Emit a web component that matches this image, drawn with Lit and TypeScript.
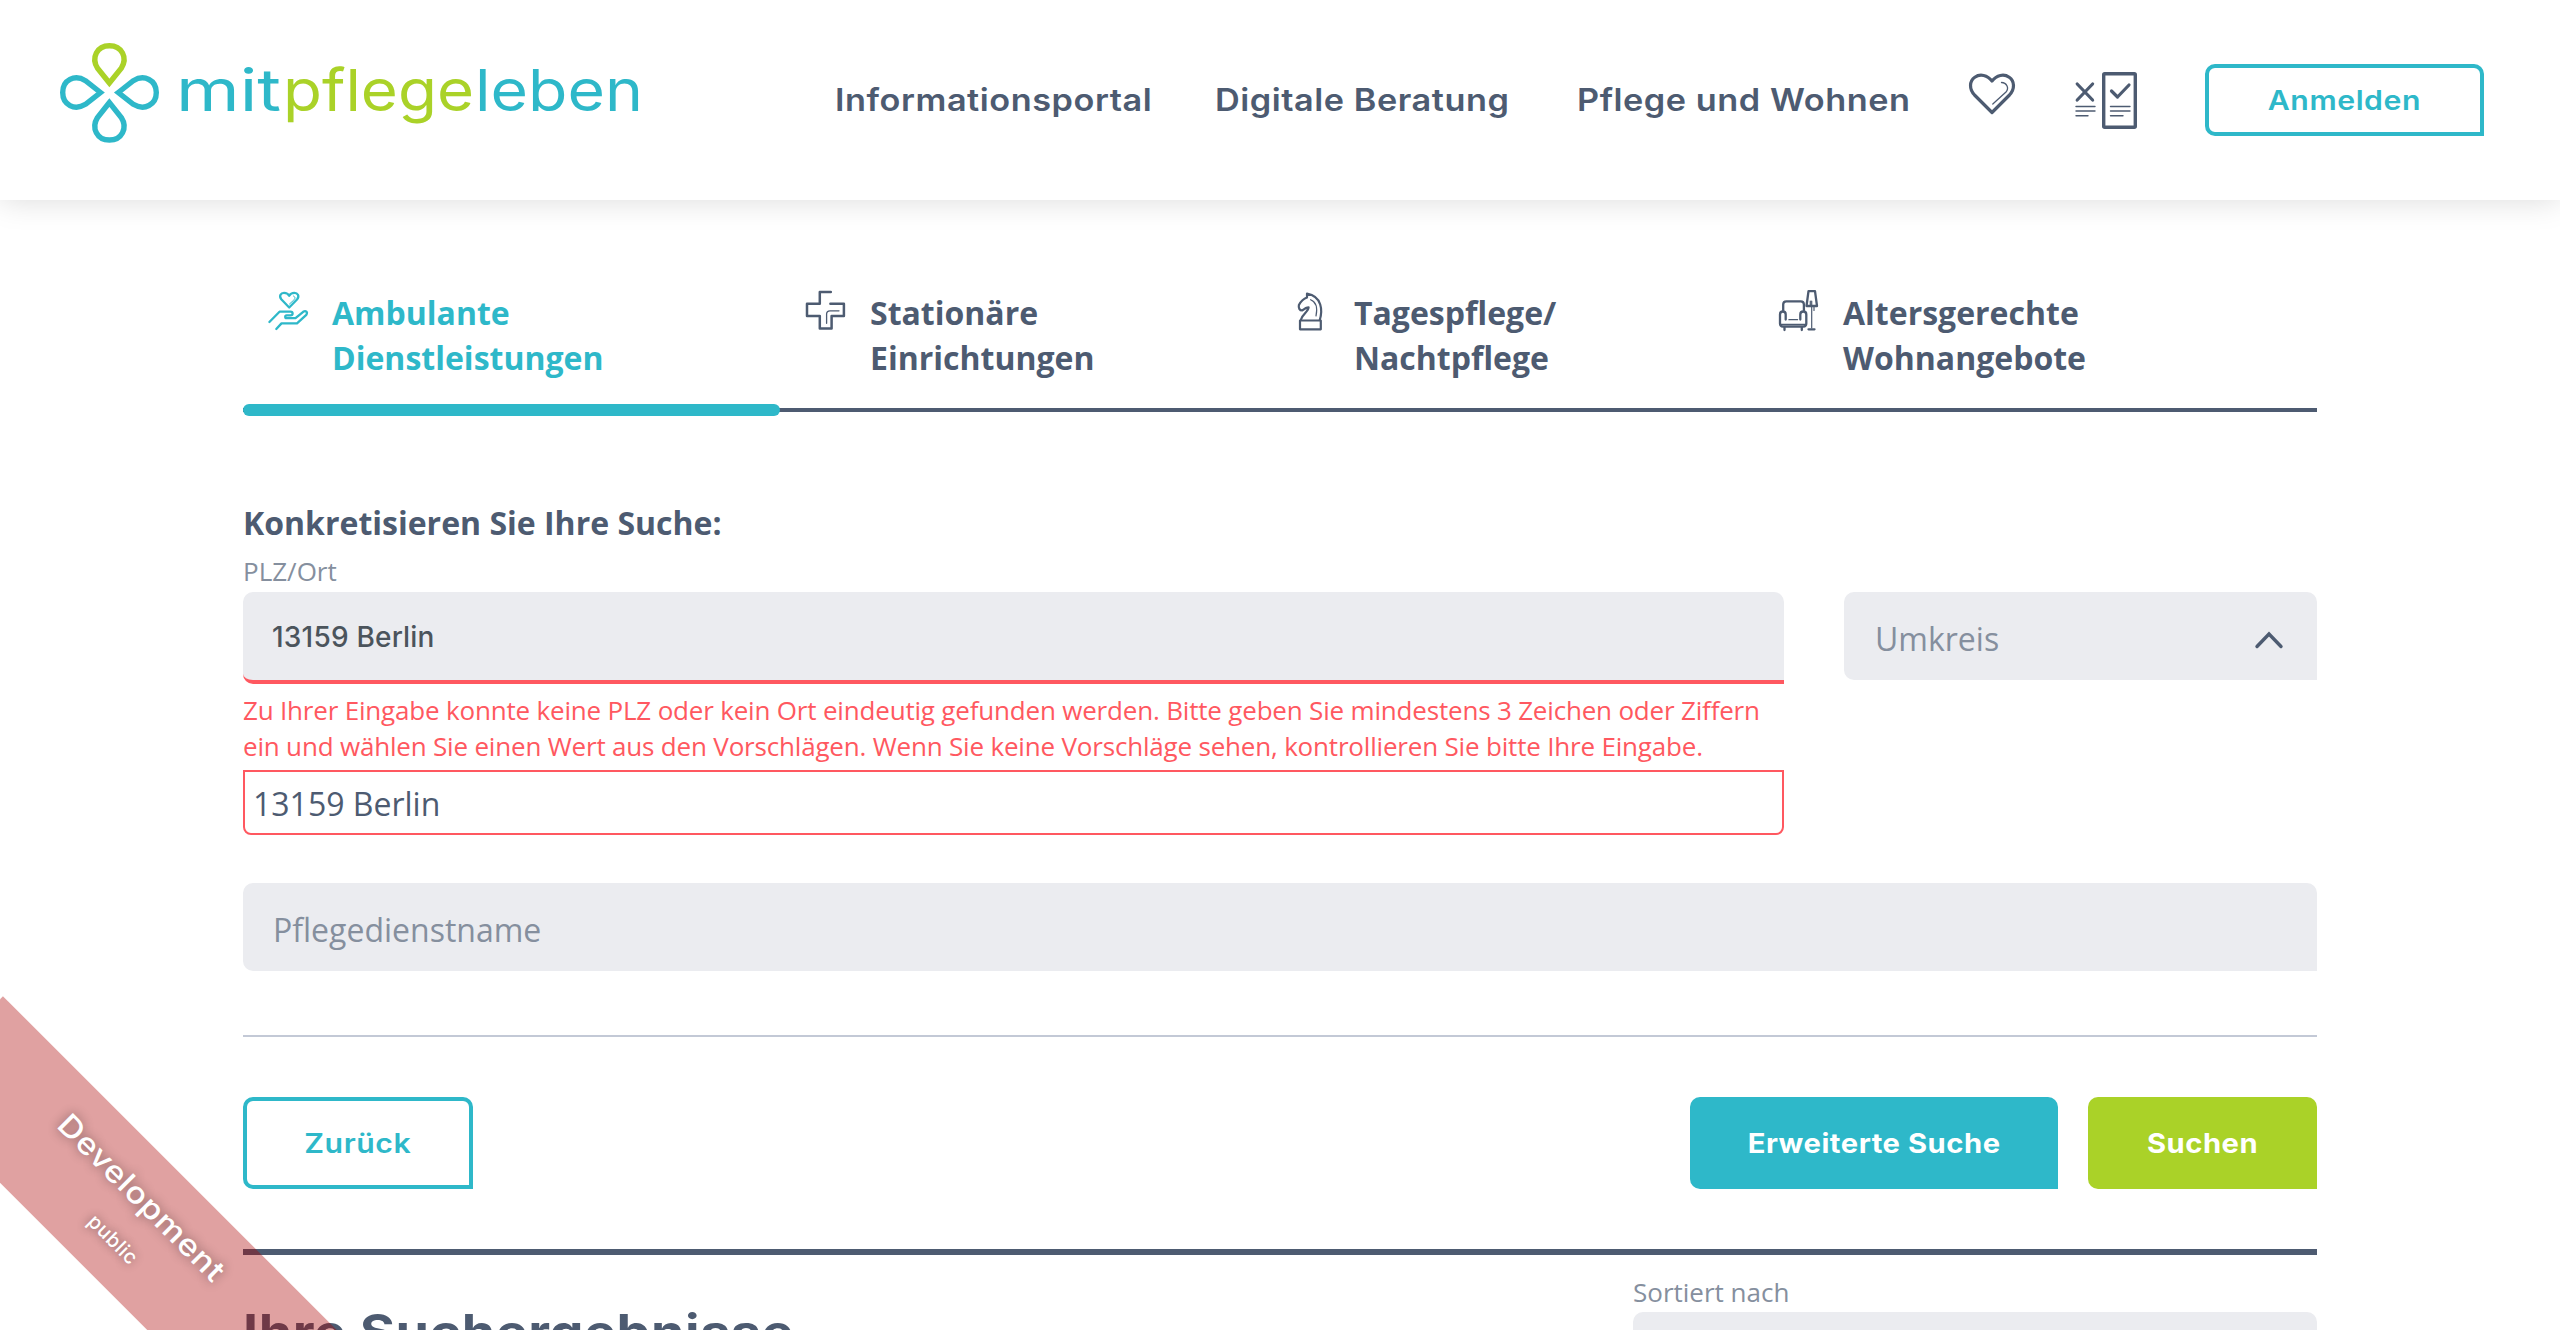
import { LitElement, html, css, svg } from "lit";
import { customElement } from "lit/decorators.js";

const clover = html`
  <svg class="logo" width="584" height="104" viewBox="0 0 584 104">
    <g fill="none" stroke-width="5.4" stroke-linejoin="miter" transform="translate(-1 0)">
      <path stroke="#aad228" d="M50.4 42 L38.5 27.2 C32 16.700 38 4.700 50.4 4.700 C62.800 4.700 69 16.700 62.300 27.200 Z" />
      <path stroke="#2eb8c9" d="M50.400 61.500 L38.500 76.500 C32 87 38 99 50.400 99 C62.800 99 69 87 62.300 76.500 Z" />
      <path stroke="#2eb8c9" d="M41.500 51.500 L26.500 39.700 C15.500 33 3.700 39.200 3.700 51.500 C3.700 63.800 15.500 70 26.500 63.300 Z" />
      <path stroke="#2eb8c9" d="M59.300 51.500 L74.300 39.700 C85.300 33 97.300 39.200 97.300 51.500 C97.300 63.800 85.300 70 74.300 63.300 Z" />
    </g>
    <g font-family="Inter, sans-serif" font-size="58">
      <text x="116" y="69.700" fill="#2eb8c9" textLength="105" lengthAdjust="spacingAndGlyphs">mit</text>
      <text x="223" y="69.700" fill="#aad228" textLength="191" lengthAdjust="spacingAndGlyphs">pflege</text>
      <text x="415" y="69.700" fill="#2eb8c9" textLength="168" lengthAdjust="spacingAndGlyphs">leben</text>
    </g>
  </svg>`;

const heart = html`
  <svg width="48" height="44" viewBox="0 0 48 44" fill="none" stroke="#4d5b71" stroke-linejoin="round">
    <path stroke-width="3.200" d="M24 40.500 L6.500 23 C1 17 1.300 9 6.800 5.200 C12 1.500 19.500 3 24 9 C28.500 3 36 1.500 41.200 5.200 C46.700 9 47 17 41.500 23 Z" />
    <path stroke-width="1.300" stroke-linecap="round" d="M33.500 10.500 C38.500 10.500 41.500 16 38 20 L24.800 32" />
  </svg>`;

const compare = html`
  <svg width="64" height="58" viewBox="0 0 64 58" fill="none" stroke="#4d5b71" stroke-linecap="round" stroke-linejoin="round">
    <rect x="29.700" y="1.700" width="31.600" height="53.500" rx="1" stroke-width="3.400" />
    <path stroke-width="3.200" d="M3.200 12 L18.600 28 M18.600 12 L3.200 28 M37.500 19 L43.500 25 L55 13" />
    <path stroke-width="1.400" d="M2 34.500 H21 M2 39 H21 M2 43.700 H14 M36.500 34.500 H56 M36.500 39 H56 M36.500 43.700 H49" />
  </svg>`;

const careIcon = svg`
  <path stroke-width="2.300" d="M22.200 17.500 L14.500 9.500 C11.500 6 14 2.800 17 2.800 C19.500 2.800 21.300 4 22.200 5.800 C23.100 4 24.900 2.800 27.400 2.800 C30.400 2.800 33 6 30 9.500 Z" />
  <path stroke-width="1" d="M26.500 6 C29 7 28 9 26.500 10.300 L22.500 14" />
  <path stroke-width="2.300" d="M2.400 32 L12.500 21.700 H23.500 C26.300 21.700 26.300 25.300 23.500 25.300 H19.500 C17.800 25.300 17.800 28.200 19.500 28.200 H28.500 L36.200 21.800 C38.800 20 41 22.300 39.300 24.800 L30 33.400 H14.500 L9.300 39" />`;

const crossIcon = svg`
  <path stroke-width="2.500" d="M25.800 4 H14.800 V15.700 H2 V28 H14.800 V40.500 H26.600 V28 H38.900 V15.700 H25.400" />
  <path stroke-width="1.300" d="M34 22.800 H25 Q21.600 22.800 21.600 26 V35.300" />`;

const knightIcon = svg`
  <path stroke-width="2.200" d="M4 29.500 H24.800 V38.300 H4 Z" />
  <path stroke-width="2.200" d="M23.800 29 C26.500 20 26.500 5.500 11 2.700 V6.500 C6.500 8 4.500 11 2.900 14 C2.300 17 3.500 19.500 6.200 19.500 C8 18 10 16.300 12.600 16.300 C12.600 20.500 6.500 23 5 28.500" />
  <path stroke-width="1.200" d="M14.600 8.700 C20.500 11 21.500 18 20 25" />`;

const chairIcon = svg`
  <path stroke-width="2.300" d="M5.200 22.500 V16.500 Q5.200 13.300 8.400 13.300 H22.700 Q25.900 13.300 25.900 16.500 V22.500" />
  <path stroke-width="2.300" d="M7.700 31.500 V26.500 C7.700 22.500 2 22.500 2 26.500 V35.500 Q2 38.500 5 38.500 H25.300 Q28.300 38.500 28.300 35.500 V26.500 C28.300 22.500 22.300 22.500 22.300 26.500 V31.500 M6.500 39 V42 M23.800 39 V42" />
  <path stroke-width="1.200" d="M10.900 31.700 H19.600 M3 36.300 H27 M33.700 13 V40 M36 18 V22.500 M32.300 13 V17" />
  <path stroke-width="2.300" d="M30.500 3.200 H37 L39 18 H28.500 Z M30.500 41.300 H36.500" />`;

const tabs = [
  { icon: careIcon, lines: ["Ambulante", "Dienstleistungen"], active: true },
  { icon: crossIcon, lines: ["Stationäre", "Einrichtungen"], active: false },
  { icon: knightIcon, lines: ["Tagespflege/", "Nachtpflege"], active: false, narrow: true },
  { icon: chairIcon, lines: ["Altersgerechte", "Wohnangebote"], active: false },
];

@customElement("app-root")
export class AppRoot extends LitElement {
  static styles = css`
    :host {
      display: block;
      position: relative;
      height: 1330px;
      overflow: hidden;
      background: #fff;
      color: #4d5b71;
      font-family: "Open Sans", sans-serif;
      font-size: 32px;
      line-height: 45px;
      white-space: nowrap;
    }
    * { box-sizing: border-box; }
    svg { display: block; flex: none; }

    .header {
      display: flex;
      height: 200px;
      padding-left: 60px;
      box-shadow: 0 0 30px rgba(0, 0, 0, 0.15);
    }
    .logo { margin-top: 41px; }
    .nav {
      display: grid;
      grid-template-columns: 380px 362px 391px;
      margin: 77px 0 0 191px;
      font: 600 31px/45px Inter, sans-serif;
      letter-spacing: 0.5px;
    }
    .wide {
      display: inline-block;
      justify-self: start;
      transform: scaleX(1.105);
      transform-origin: left;
    }
    .heart { margin-top: 72px; }
    .compare { margin: 72px 0 0 58px; }
    .button {
      display: flex;
      align-items: center;
      justify-content: center;
      height: 92px;
      padding-top: 1px;
      border-radius: 10px 10px 0 10px;
      font: 600 27px/40px Inter, sans-serif;
      letter-spacing: 0.5px;
    }
    .button .wide { transform: scaleX(1.12); transform-origin: center; }
    .outline { border: 4px solid #2eb8c9; color: #2eb8c9; }
    .login { width: 279px; height: 72px; margin: 64px 0 0 67px; }
    .back { width: 230px; }
    .extended { width: 368px; margin-left: auto; background: #2eb8c9; }
    .submit { width: 229px; margin-left: 30px; background: #aad228; }
    .extended, .submit { color: #fff; font-weight: 700; }
    .extended .wide, .submit .wide { transform: scaleX(1.08); }

    .main { width: 2074px; margin-left: 243px; padding-top: 90px; }
    .tabs {
      display: grid;
      grid-template-columns: 537px 484px 489px 1fr;
      height: 122px;
      border-bottom: 4px solid #4d5b71;
      font-weight: 700;
    }
    .tab { position: relative; display: flex; padding-left: 25px; }
    .tab svg { margin: -2px 22px 0 0; }
    .tab .narrow { margin: 1px 18px 0 7px; }
    .active { padding-left: 24px; color: #2eb8c9; }
    .active svg { margin: 0 22px 0 0; }
    .active::after {
      content: "";
      position: absolute;
      left: 0;
      right: 0;
      bottom: -8px;
      height: 12px;
      border-radius: 6px;
      background: #2eb8c9;
    }

    .title { margin: 88px 0 8px; font-size: 32px; line-height: 45px; font-weight: 700; }
    .label { height: 39px; font-size: 26px; line-height: 37px; color: #858f9e; }
    .row { display: grid; grid-template-columns: 1541px 473px; column-gap: 60px; }
    .field {
      display: flex;
      align-items: center;
      justify-content: space-between;
      height: 88px;
      padding: 4px 33px 0 30px;
      border-radius: 10px 10px 0 10px;
      background: #ebecf0;
      color: #858f9e;
    }
    .umkreis { margin-top: 39px; padding-left: 31px; }
    .umkreis svg { margin-top: 4px; }
    .invalid {
      height: 92px;
      padding: 1px 0 0 29px;
      border-bottom: 4px solid #ff5860;
      color: #4b545c;
      font: 500 28px/40px Inter, sans-serif;
      letter-spacing: 0.2px;
    }
    .error {
      margin: 8px 0 6px;
      font-size: 26px;
      line-height: 36px;
      letter-spacing: -0.186px;
      color: #ff5860;
    }
    .plain {
      height: 65px;
      padding: 9px 8px 0;
      border: 2px solid #ff5860;
      border-radius: 0 0 8px 8px;
    }
    .name { margin-top: 48px; }
    .actions {
      display: flex;
      margin-top: 64px;
      padding: 60px 0;
      border-top: 2px solid #c3c9d6;
    }
    .results {
      display: flex;
      justify-content: space-between;
      border-top: 6px solid #4d5b71;
    }
    .heading {
      margin: 47px 0 0;
      font: 700 48px/60px Inter, sans-serif;
      letter-spacing: 0.5px;
    }
    .heading .wide { transform: scaleX(1.12); }
    .sort { width: 684px; padding-top: 19px; }
    .sort .label { height: 38px; }

    .ribbon {
      position: absolute;
      left: -115.5px;
      top: 1146.8px;
      width: 482px;
      height: 134px;
      padding-top: 24px;
      transform: rotate(45deg);
      background: rgba(170, 0, 0, 0.37);
      color: #fff;
      text-align: center;
      text-shadow: 0 0 10px rgba(0, 0, 0, 0.45);
      font: 500 30px/40px Inter, sans-serif;
      letter-spacing: 0.5px;
    }
    .ribbon .wide { transform: scaleX(1.14); transform-origin: center; }
    .scope { padding-left: 18px; font-size: 20px; line-height: 60px; }
  `;

  render() {
    return html`
      <header class="header">
        ${clover}
        <nav class="nav">
          <span class="wide">Informationsportal</span>
          <span class="wide">Digitale Beratung</span>
          <span class="wide">Pflege und Wohnen</span>
        </nav>
        <div class="heart">${heart}</div>
        <div class="compare">${compare}</div>
        <div class="button outline login"><span class="wide">Anmelden</span></div>
      </header>
      <main class="main">
        <div class="tabs">
          ${tabs.map(
            (t) => html`<div class="tab ${t.active ? "active" : ""}">
              <svg class=${t.narrow ? "narrow" : ""} width=${t.narrow ? 40 : 43} height="44"
                viewBox="0 0 ${t.narrow ? 40 : 43} 44" fill="none" stroke="currentColor"
                stroke-linecap="round" stroke-linejoin="round">${t.icon}</svg>
              <div>${t.lines[0]}<br />${t.lines[1]}</div>
            </div>`
          )}
        </div>
        <h2 class="title">Konkretisieren Sie Ihre Suche:</h2>
        <div class="row">
          <div>
            <div class="label">PLZ/Ort</div>
            <div class="field invalid">13159 Berlin</div>
            <div class="error">
              Zu Ihrer Eingabe konnte keine PLZ oder kein Ort eindeutig gefunden werden. Bitte geben Sie mindestens 3 Zeichen oder Ziffern<br />
              ein und wählen Sie einen Wert aus den Vorschlägen. Wenn Sie keine Vorschläge sehen, kontrollieren Sie bitte Ihre Eingabe.
            </div>
            <div class="plain">13159 Berlin</div>
          </div>
          <div class="field umkreis">
            Umkreis
            <svg width="30" height="20" viewBox="0 0 30 20" fill="none" stroke="#4d5b71"
              stroke-width="3.400" stroke-linecap="round" stroke-linejoin="miter">
              <path d="M3 16.500 L15 4 L27 16.500" />
            </svg>
          </div>
        </div>
        <div class="field name">Pflegedienstname</div>
        <div class="actions">
          <div class="button outline back"><span class="wide">Zurück</span></div>
          <div class="button extended"><span class="wide">Erweiterte Suche</span></div>
          <div class="button submit"><span class="wide">Suchen</span></div>
        </div>
        <section class="results">
          <h1 class="heading"><span class="wide">Ihre Suchergebnisse</span></h1>
          <div class="sort">
            <div class="label">Sortiert nach</div>
            <div class="field"></div>
          </div>
        </section>
      </main>
      <div class="ribbon">
        <span class="wide">Development</span>
        <div class="scope">public</div>
      </div>
    `;
  }
}
